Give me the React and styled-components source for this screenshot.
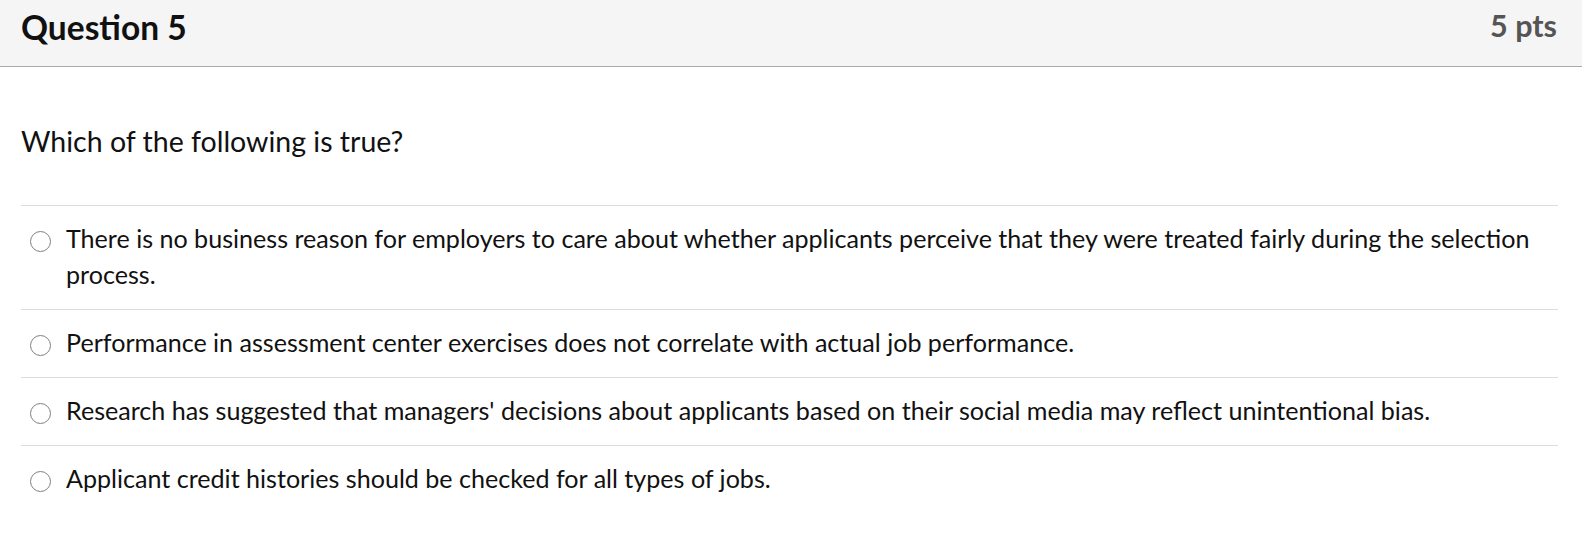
import React from "react";
import { styled, createGlobalStyle } from "styled-components";

const GlobalStyle = createGlobalStyle`
  html, body {
    margin: 0;
    padding: 0;
    background: #fff;
    font-family: Lato, "Open Sans", sans-serif;
    color: #111;
  }
  * {
    box-sizing: border-box;
  }
`;

const Page = styled.div`
  width: 1582px;
  display: flex;
  flex-direction: column;
`;

const Header = styled.div`
  height: 67px;
  background: #f5f5f5;
  border-bottom: 1px solid #aaaaaa;
  display: flex;
  justify-content: space-between;
  align-items: flex-start;
  padding: 3px 25px 0 21px;
`;

const Title = styled.h2`
  margin: 0;
  font-size: 33.5px;
  font-weight: 700;
  line-height: 48px;
  color: #111;
`;

const Points = styled.div`
  font-size: 30.5px;
  font-weight: 700;
  line-height: 44px;
  color: #555;
`;

const Body = styled.div`
  padding: 0 24px 0 21px;
`;

const Prompt = styled.p`
  margin: 0;
  padding: 56px 0 46px;
  font-size: 28.5px;
  line-height: 36px;
`;

const Answers = styled.div`
  display: flex;
  flex-direction: column;
`;

const Answer = styled.label`
  display: flex;
  align-items: flex-start;
  gap: 15px;
  padding: 14px 0 17px 9px;
  border-top: 1px solid #ddd;
  font-size: 25.1px;
  line-height: 36px;
`;

const Radio = styled.span`
  flex: none;
  width: 21px;
  height: 21px;
  margin-top: 11px;
  border: 1.5px solid #808080;
  border-radius: 50%;
  background: #fff;
`;

const answers = [
  "There is no business reason for employers to care about whether applicants perceive that they were treated fairly during the selection process.",
  "Performance in assessment center exercises does not correlate with actual job performance.",
  "Research has suggested that managers' decisions about applicants based on their social media may reflect unintentional bias.",
  "Applicant credit histories should be checked for all types of jobs.",
];

export default function App() {
  return (
    <Page>
      <GlobalStyle />
      <Header>
        <Title>Question 5</Title>
        <Points>5 pts</Points>
      </Header>
      <Body>
        <Prompt>Which of the following is true?</Prompt>
        <Answers>
          {answers.map((a) => (
            <Answer key={a}>
              <Radio />
              <span>{a}</span>
            </Answer>
          ))}
        </Answers>
      </Body>
    </Page>
  );
}
